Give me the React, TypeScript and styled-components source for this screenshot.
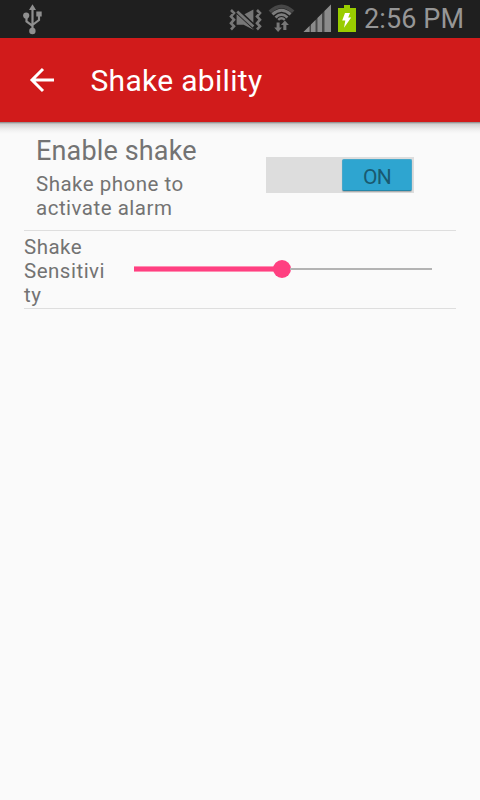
import React from 'react';
import styled, { createGlobalStyle } from 'styled-components';

const GlobalStyle = createGlobalStyle`
  * { box-sizing: border-box; }
  body { margin: 0; background: #fafafa; }
`;

const Screen = styled.div`
  width: 480px;
  height: 800px;
  display: flex;
  flex-direction: column;
  background: #fafafa;
  color: #737373;
  font-family: Roboto, 'Liberation Sans', sans-serif;
  font-weight: 380;
  overflow: hidden;
`;

const StatusBar = styled.div`
  height: 38px;
  flex: none;
  display: flex;
  justify-content: space-between;
  padding: 0 17px 0 22px;
  background: #1f1f1f;
  color: #969696;
`;

const StatusIcons = styled.div`
  display: flex;
  svg { display: block; flex: none; }
`;

const Clock = styled.span`
  width: 99px;
  margin-left: 8px;
  font-size: 27px;
  line-height: 38px;
  letter-spacing: 0.1px;
  white-space: nowrap;
`;

const Gap = styled.span<{ $size: number }>`
  width: ${(p) => p.$size}px;
  flex: none;
`;

const AppBar = styled.header`
  height: 84px;
  flex: none;
  display: flex;
  align-items: center;
  padding-left: 24px;
  background: #d11b1b;
  color: #fff;
`;

const BackButton = styled.button`
  width: 36px;
  height: 36px;
  padding: 0;
  border: 0;
  background: none;
  color: inherit;
  svg { display: block; }
`;

const Title = styled.h1`
  margin: 2px 0 0 30.5px;
  font-size: 30px;
  line-height: 36px;
  font-weight: 400;
  letter-spacing: 0.3px;
`;

const Shadow = styled.div`
  height: 12px;
  flex: none;
  background: linear-gradient(#858585 0, #a9a9a9 1px, #cfcfcf 2px, #dcdcdc 4px, #ededed 7px, #f6f6f6 10px, #fafafa 12px);
`;

const Settings = styled.main`
  margin: 0 24px;
`;

const ToggleRow = styled.section`
  height: 97px;
  display: flex;
  padding-left: 12px;
  border-bottom: 1px solid #dedede;
`;

const Labels = styled.div`
  width: 230px;
`;

const Heading = styled.div`
  font-size: 27px;
  line-height: 32px;
  margin: 1px 0 5px;
  letter-spacing: 0.15px;
`;

const Caption = styled.div<{ $width: number }>`
  width: ${(p) => p.$width}px;
  font-size: 20.5px;
  line-height: 24px;
  letter-spacing: 0.5px;
`;

const Switch = styled.button`
  width: 148px;
  height: 36px;
  margin-top: 23px;
  padding: 2px 2px 2px 76px;
  border: 0;
  background: #ddd;
`;

const Thumb = styled.span`
  display: block;
  height: 32px;
  border: 1px solid #47a8cb;
  border-bottom-color: #2686a8;
  border-radius: 2px;
  background: #2ea5d0;
  box-shadow: 0 1px 1px #aaa;
  color: #195a70;
  font: 380 21px/35px Roboto, sans-serif;
  letter-spacing: -0.6px;
  text-align: center;
`;

const SliderRow = styled.section`
  height: 78px;
  display: flex;
  padding-top: 4px;
  border-bottom: 1px solid #dedede;
`;

const Slider = styled.div`
  width: 298px;
  height: 18px;
  margin: 25px 0 0 26px;
  display: grid;
  grid-template-columns: 139px 18px 141px;
  align-items: center;
`;

const Bar = styled.span<{ $active?: boolean }>`
  height: ${(p) => (p.$active ? 6 : 2)}px;
  margin: 0 ${(p) => (p.$active ? '-2px 0 0' : '0 0 -1px')};
  background: ${(p) => (p.$active ? 'linear-gradient(#ff8fb3 1px, #ff4081 1px, #ff4081 5px, #ff8fb3 5px)' : '#b3b3b3')};
`;

const Knob = styled.span`
  width: 18px;
  height: 18px;
  border-radius: 50%;
  background: #ff4081;
`;

const UsbIcon = () => (
  <svg width="21" height="38" viewBox="0 0 21 38" fill="none" stroke="#8f8f8f">
    <path d="M10.5 8v22M4.5 16v5.5l6 4.3M17 15v5L10.5 25" strokeWidth="2.2" />
    <path d="M10.5 4.3 14 10H7Z" fill="#8f8f8f" stroke="none" />
    <circle cx="4.2" cy="15.6" r="3.1" fill="#8f8f8f" stroke="none" />
    <path d="M14.3 11.5h5.4v5h-5.4z" fill="#8f8f8f" stroke="none" />
    <circle cx="10.4" cy="31" r="3.2" fill="#8f8f8f" stroke="none" />
  </svg>
);

/* Muted speaker between two vibration waves. */
const MuteIcon = () => (
  <svg width="33" height="38" viewBox="0 0 33 38" fill="#777">
    <path d="M7.6 14.2h1.6l15.2 14.6v.9L14.6 24.8h-7Z" />
    <path d="m15.5 14.2 8.9-4.7v13.2Z" />
    <path d="m8.2 11.5 16.2 15" stroke="#777" strokeWidth="2.7" />
    <path d="m7.6 13.6 16.8 15.5" stroke="#1f1f1f" strokeWidth=".9" />
    <path d="m2 10 3 3-3 3.4 3 3.3-3 3.4 3 3.2-3 3.2M28 10l3 3-3 3.4 3 3.3-3 3.4 3 3.2-3 3.2" fill="none" stroke="#777" strokeWidth="2.6" />
  </svg>
);

const WifiIcon = () => (
  <svg width="28" height="38" viewBox="0 0 28 38" fill="none">
    <path d="M1.8 11.8Q13.5.8 25.2 11.8" stroke="#474747" strokeWidth="3.6" />
    <path d="M4.4 14.4Q13.5 6.2 22.6 14.4" stroke="#7c7c7c" strokeWidth="3" />
    <path d="M7.5 17.4Q13.5 11.8 19.5 17.4" stroke="#7c7c7c" strokeWidth="2.8" />
    <path d="M10.2 19.8Q13.5 16.6 16.8 19.8" stroke="#7c7c7c" strokeWidth="2.4" />
    <path d="M8.6 22.5h3v5h2.4l-3.9 4.6-3.9-4.6h2.4ZM15.3 30v-5h-2.4l4-4.5 4 4.5h-2.5V30Z" fill="#777" />
  </svg>
);

const SignalIcon = () => (
  <svg width="29" height="38" viewBox="0 0 29 38">
    <path d="M.5 32 28 4.5V32Z" fill="#484848" />
    <path d="M.5 32 6.5 26V32ZM8 32v-7.5l4.5-4.5V32ZM14.5 32V18l4.5-4.5V32ZM21.5 32V11l6.5-6.5V32Z" fill="#8b8b8b" />
  </svg>
);

const BatteryIcon = () => (
  <svg width="19" height="38" viewBox="0 0 19 38">
    <path d="M1 8H7V5h6v3h6v24H1Z" fill="#99cc00" />
    <path d="m8 13 5-.1-1.8 4.6h3L7 27.8l1.3-7.3H5.2Z" fill="#fff" />
  </svg>
);

export default function App() {
  return (
    <Screen>
      <GlobalStyle />
      <StatusBar>
        <StatusIcons><UsbIcon /></StatusIcons>
        <StatusIcons>
          <MuteIcon />
          <Gap $size={6} />
          <WifiIcon />
          <Gap $size={7} />
          <SignalIcon />
          <Gap $size={5} />
          <BatteryIcon />
          <Clock>2:56 PM</Clock>
        </StatusIcons>
      </StatusBar>
      <AppBar>
        <BackButton aria-label="Back">
          <svg width="36" height="36" viewBox="0 0 36 36" fill="none" stroke="#fff" strokeWidth="3">
            <path d="M30 18H8.5M19 7 8 18l11 11" />
          </svg>
        </BackButton>
        <Title>Shake ability</Title>
      </AppBar>
      <Shadow />
      <Settings>
        <ToggleRow>
          <Labels>
            <Heading>Enable shake</Heading>
            <Caption $width={170}>Shake phone to activate alarm</Caption>
          </Labels>
          <Switch role="switch" aria-checked="true"><Thumb>ON</Thumb></Switch>
        </ToggleRow>
        <SliderRow>
          <Caption $width={84}>Shake Sensitivi<wbr />ty</Caption>
          <Slider role="slider" aria-valuenow={50}>
            <Bar $active />
            <Knob />
            <Bar />
          </Slider>
        </SliderRow>
      </Settings>
    </Screen>
  );
}
